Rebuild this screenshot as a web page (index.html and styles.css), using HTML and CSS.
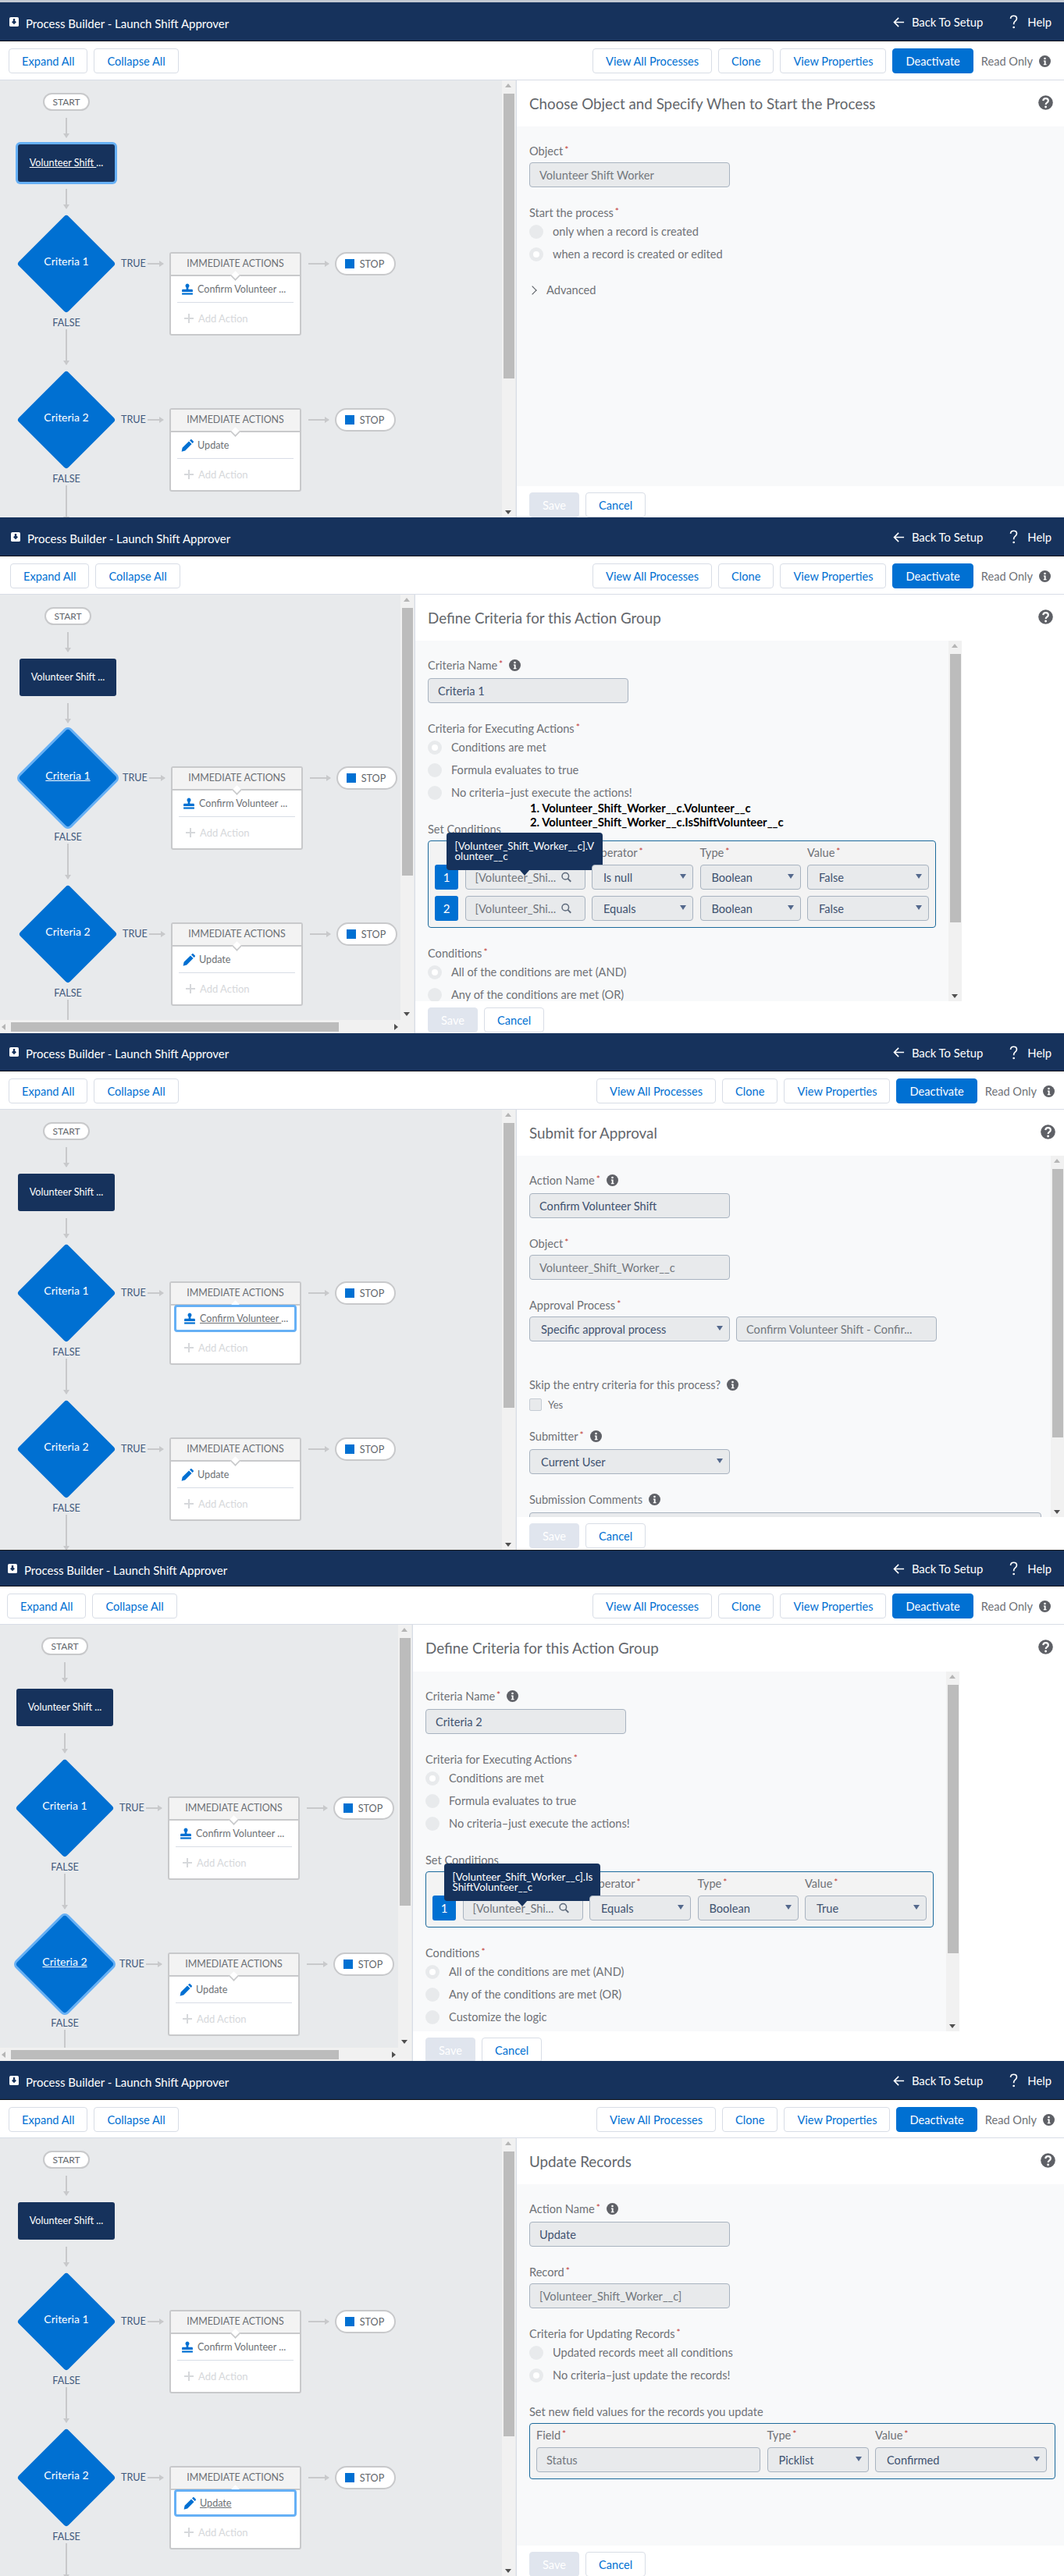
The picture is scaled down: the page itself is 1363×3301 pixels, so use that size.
FILE: index.html
```html
<!DOCTYPE html>
<html lang="en">
<head>
  <meta charset="UTF-8" />
  <title>Process Builder - Launch Shift Approver</title>
  <link rel="stylesheet" href="styles.css">
</head>
<body>
  <!-- ICONS -->
  <svg class="sprite" aria-hidden="true">
    <symbol id="i-logo" viewBox="0 0 16 16"><rect x="0" y="0" width="16" height="16" rx="2.5" fill="#fff"/><path d="M8 4.5 12 8.4 8 12.4 4 8.4zM6.4 2.5h3.2v3H6.4z" fill="#16325c"/></symbol>
    <symbol id="i-back" viewBox="0 0 16 16"><path d="M15 8H1.8M7.6 2 1.6 8l6 6" fill="none" stroke="#fff" stroke-width="1.7"/></symbol>
    <symbol id="i-q" viewBox="0 0 12 20"><path d="M1.6 5.4C1.8 2.8 3.6 1.4 6 1.4c2.600 0 4.400 1.500 4.400 3.900 0 2-1.200 3-2.500 4-1.100.9-1.700 1.600-1.700 3.300v1.100" fill="none" stroke="#fff" stroke-width="1.900"/><circle cx="6.200" cy="17.800" r="1.500" fill="#fff"/></symbol>
    <symbol id="i-info" viewBox="0 0 16 16"><circle cx="8" cy="8" r="8" fill="currentColor"/><circle cx="8" cy="4.300" r="1.400" fill="#fff"/><path d="M6.300 7h2.900v4.800h1v1.300H6.200v-1.300h1V8.300h-.9z" fill="#fff"/></symbol>
    <symbol id="i-help" viewBox="0 0 20 20"><circle cx="10" cy="10" r="9.800" fill="currentColor"/><path d="M6.600 7.400C6.800 5.400 8.200 4.300 10.100 4.300c2 0 3.400 1.200 3.400 3 0 1.500-.9 2.200-1.800 2.900-.9.700-1.500 1.300-1.500 2.500" fill="none" stroke="#fff" stroke-width="2.300"/><circle cx="10.100" cy="15.800" r="1.500" fill="#fff"/></symbol>
    <symbol id="i-stamp" viewBox="0 0 16 16"><path d="M8 .6a2.600 2.600 0 0 0-1.800 4.400c.5.600.6 1.400.4 2.800H2.400c-.8 0-1.300.5-1.300 1.300V11h13.800V9.100c0-.8-.5-1.300-1.300-1.300H9.400c-.2-1.400-.1-2.200.4-2.800A2.600 2.600 0 0 0 8 .6z" fill="currentColor"/><rect x="1.100" y="12.400" width="13.800" height="2.200" fill="currentColor"/></symbol>
    <symbol id="i-pencil" viewBox="0 0 16 16"><path d="M.6 15.700l1-4.900L10 2.400l3.600 3.600-8.400 8.500zM11 1.400l1-1c.5-.5 1.200-.5 1.700 0l1.900 1.900c.5.500.5 1.200 0 1.700l-1 1z" fill="currentColor"/></symbol>
    <symbol id="i-search" viewBox="0 0 14 14"><circle cx="5.700" cy="5.700" r="4.600" fill="none" stroke="#5f6b7c" stroke-width="1.600"/><path d="M9 9l4.200 4.200" stroke="#5f6b7c" stroke-width="2"/></symbol>
  </svg>

  <!-- SCREEN 1: START THE PROCESS -->
  <section class="screen screen-1">
    <header class="topbar">
      <div class="topbar-title"><svg class="logo"><use href="#i-logo"/></svg>Process Builder - Launch Shift Approver</div>
      <div class="topbar-links">
        <a class="top-link"><svg class="back-icon"><use href="#i-back"/></svg>Back To Setup</a>
        <a class="top-link top-help"><svg class="q-icon"><use href="#i-q"/></svg>Help</a>
      </div>
    </header>
    <div class="toolbar">
      <div class="btn-group">
        <a class="btn">Expand All</a>
        <a class="btn">Collapse All</a>
      </div>
      <div class="btn-group">
        <a class="btn">View All Processes</a>
        <a class="btn">Clone</a>
        <a class="btn">View Properties</a>
        <a class="btn btn-brand">Deactivate</a>
        <span class="read-only">Read Only<svg class="info"><use href="#i-info"/></svg></span>
      </div>
    </div>
    <div class="workspace">
      <div class="canvas">
        <div class="flow">
          <div class="pill pill-start">START</div>
          <div class="link"></div>
          <div class="object-node is-active"><u>Volunteer Shift </u>...</div>
          <div class="link"></div>
          <div class="criteria">
            <div class="decision">
              <div class="diamond"><span>Criteria 1</span></div>
              <div class="false-label">FALSE</div>
              <div class="link link-false"></div>
            </div>
            <div class="branch">
              <span class="true-label">TRUE</span><span class="harrow harrow-a"></span>
              <div class="actions">
                <div class="actions-head">IMMEDIATE ACTIONS</div>
                <div class="action"><svg class="action-icon"><use href="#i-stamp"/></svg><span>Confirm Volunteer ...</span></div>
                <div class="add-action"><span class="plus"></span>Add Action</div>
              </div>
              <span class="harrow harrow-b"></span>
              <div class="pill pill-stop"><i class="stop-box"></i>STOP</div>
            </div>
          </div>
          <div class="criteria">
            <div class="decision">
              <div class="diamond"><span>Criteria 2</span></div>
              <div class="false-label">FALSE</div>
              <div class="link link-false"></div>
            </div>
            <div class="branch">
              <span class="true-label">TRUE</span><span class="harrow harrow-a"></span>
              <div class="actions">
                <div class="actions-head">IMMEDIATE ACTIONS</div>
                <div class="action"><svg class="action-icon"><use href="#i-pencil"/></svg><span>Update</span></div>
                <div class="add-action"><span class="plus"></span>Add Action</div>
              </div>
              <span class="harrow harrow-b"></span>
              <div class="pill pill-stop"><i class="stop-box"></i>STOP</div>
            </div>
          </div>
        </div>
        <div class="vscroll"><i class="arrow-up"></i><div class="thumb"></div><i class="arrow-down"></i></div>
      </div>
      <div class="panel">
        <div class="panel-head"><h2>Choose Object and Specify When to Start the Process</h2><svg class="help"><use href="#i-help"/></svg></div>
        <div class="panel-body">
          <div class="field">
            <div class="label">Object<span class="req">*</span></div>
            <div class="input">Volunteer Shift Worker</div>
          </div>
          <div class="field">
            <div class="label label-radios">Start the process<span class="req">*</span></div>
            <div class="radio"><i class="dot"></i>only when a record is created</div>
            <div class="radio"><i class="dot dot-on"></i>when a record is created or edited</div>
          </div>
          <div class="advanced"><i class="chevron"></i>Advanced</div>
        </div>
        <div class="panel-foot"><a class="btn btn-save">Save</a><a class="btn">Cancel</a></div>
      </div>
    </div>
  </section>

  <!-- SCREEN 2: CRITERIA 1 -->
  <section class="screen screen-2 is-narrow">
    <header class="topbar">
      <div class="topbar-title"><svg class="logo"><use href="#i-logo"/></svg>Process Builder - Launch Shift Approver</div>
      <div class="topbar-links">
        <a class="top-link"><svg class="back-icon"><use href="#i-back"/></svg>Back To Setup</a>
        <a class="top-link top-help"><svg class="q-icon"><use href="#i-q"/></svg>Help</a>
      </div>
    </header>
    <div class="toolbar">
      <div class="btn-group">
        <a class="btn">Expand All</a>
        <a class="btn">Collapse All</a>
      </div>
      <div class="btn-group">
        <a class="btn">View All Processes</a>
        <a class="btn">Clone</a>
        <a class="btn">View Properties</a>
        <a class="btn btn-brand">Deactivate</a>
        <span class="read-only">Read Only<svg class="info"><use href="#i-info"/></svg></span>
      </div>
    </div>
    <div class="workspace">
      <div class="canvas">
        <div class="flow">
          <div class="pill pill-start">START</div>
          <div class="link"></div>
          <div class="object-node">Volunteer Shift ...</div>
          <div class="link"></div>
          <div class="criteria">
            <div class="decision">
              <div class="diamond is-active"><span><u>Criteria 1</u></span></div>
              <div class="false-label">FALSE</div>
              <div class="link link-false"></div>
            </div>
            <div class="branch">
              <span class="true-label">TRUE</span><span class="harrow harrow-a"></span>
              <div class="actions">
                <div class="actions-head">IMMEDIATE ACTIONS</div>
                <div class="action"><svg class="action-icon"><use href="#i-stamp"/></svg><span>Confirm Volunteer ...</span></div>
                <div class="add-action"><span class="plus"></span>Add Action</div>
              </div>
              <span class="harrow harrow-b"></span>
              <div class="pill pill-stop"><i class="stop-box"></i>STOP</div>
            </div>
          </div>
          <div class="criteria">
            <div class="decision">
              <div class="diamond"><span>Criteria 2</span></div>
              <div class="false-label">FALSE</div>
              <div class="link link-false"></div>
            </div>
            <div class="branch">
              <span class="true-label">TRUE</span><span class="harrow harrow-a"></span>
              <div class="actions">
                <div class="actions-head">IMMEDIATE ACTIONS</div>
                <div class="action"><svg class="action-icon"><use href="#i-pencil"/></svg><span>Update</span></div>
                <div class="add-action"><span class="plus"></span>Add Action</div>
              </div>
              <span class="harrow harrow-b"></span>
              <div class="pill pill-stop"><i class="stop-box"></i>STOP</div>
            </div>
          </div>
        </div>
        <div class="vscroll"><i class="arrow-up"></i><div class="thumb"></div><i class="arrow-down"></i></div>
        <div class="hscroll"><i class="arrow-left"></i><div class="hthumb"></div><i class="arrow-right"></i></div>
      </div>
      <div class="panel">
        <div class="panel-head"><h2>Define Criteria for this Action Group</h2><svg class="help"><use href="#i-help"/></svg></div>
        <div class="panel-body">
          <div class="field">
            <div class="label label-info">Criteria Name<span class="req">*</span><svg class="info"><use href="#i-info"/></svg></div>
            <div class="input input-value">Criteria 1</div>
          </div>
          <div class="field">
            <div class="label label-radios">Criteria for Executing Actions<span class="req">*</span></div>
            <div class="radio"><i class="dot dot-on"></i>Conditions are met</div>
            <div class="radio"><i class="dot"></i>Formula evaluates to true</div>
            <div class="radio"><i class="dot"></i>No criteria–just execute the actions!</div>
          </div>
          <div class="field">
            <div class="label">Set Conditions</div>
            <div class="rows rows-criteria">
              <div class="rows-label"></div>
              <div class="rows-label rows-label-hidden">Field<span class="req">*</span></div>
              <div class="rows-label">Operator<span class="req">*</span></div>
              <div class="rows-label">Type<span class="req">*</span></div>
              <div class="rows-label">Value<span class="req">*</span></div>
              <div class="chip">1</div>
              <div class="input input-lookup">[Volunteer_Shi...<svg class="search"><use href="#i-search"/></svg>
                <div class="tooltip">[Volunteer_Shift_Worker__c].V<br>olunteer__c</div>
              </div>
              <div class="select">Is null</div>
              <div class="select">Boolean</div>
              <div class="select">False</div>
              <div class="chip">2</div>
              <div class="input input-lookup">[Volunteer_Shi...<svg class="search"><use href="#i-search"/></svg></div>
              <div class="select">Equals</div>
              <div class="select">Boolean</div>
              <div class="select">False</div>
            </div>
          </div>
          <div class="field">
            <div class="label label-radios">Conditions<span class="req">*</span></div>
            <div class="radio"><i class="dot dot-on"></i>All of the conditions are met (AND)</div>
            <div class="radio"><i class="dot"></i>Any of the conditions are met (OR)</div>
          </div>
          <ol class="note">
            <li>1. Volunteer_Shift_Worker__c.Volunteer__c</li>
            <li>2. Volunteer_Shift_Worker__c.IsShiftVolunteer__c</li>
          </ol>
          <div class="vscroll"><i class="arrow-up"></i><div class="thumb"></div><i class="arrow-down"></i></div>
        </div>
        <div class="panel-foot"><a class="btn btn-save">Save</a><a class="btn">Cancel</a></div>
      </div>
    </div>
  </section>

  <!-- SCREEN 3: SUBMIT FOR APPROVAL -->
  <section class="screen screen-3">
    <header class="topbar">
      <div class="topbar-title"><svg class="logo"><use href="#i-logo"/></svg>Process Builder - Launch Shift Approver</div>
      <div class="topbar-links">
        <a class="top-link"><svg class="back-icon"><use href="#i-back"/></svg>Back To Setup</a>
        <a class="top-link top-help"><svg class="q-icon"><use href="#i-q"/></svg>Help</a>
      </div>
    </header>
    <div class="toolbar">
      <div class="btn-group">
        <a class="btn">Expand All</a>
        <a class="btn">Collapse All</a>
      </div>
      <div class="btn-group">
        <a class="btn">View All Processes</a>
        <a class="btn">Clone</a>
        <a class="btn">View Properties</a>
        <a class="btn btn-brand">Deactivate</a>
        <span class="read-only">Read Only<svg class="info"><use href="#i-info"/></svg></span>
      </div>
    </div>
    <div class="workspace">
      <div class="canvas">
        <div class="flow">
          <div class="pill pill-start">START</div>
          <div class="link"></div>
          <div class="object-node">Volunteer Shift ...</div>
          <div class="link"></div>
          <div class="criteria">
            <div class="decision">
              <div class="diamond"><span>Criteria 1</span></div>
              <div class="false-label">FALSE</div>
              <div class="link link-false"></div>
            </div>
            <div class="branch">
              <span class="true-label">TRUE</span><span class="harrow harrow-a"></span>
              <div class="actions">
                <div class="actions-head">IMMEDIATE ACTIONS</div>
                <div class="action is-active"><svg class="action-icon"><use href="#i-stamp"/></svg><span><u>Confirm Volunteer </u>...</span></div>
                <div class="add-action"><span class="plus"></span>Add Action</div>
              </div>
              <span class="harrow harrow-b"></span>
              <div class="pill pill-stop"><i class="stop-box"></i>STOP</div>
            </div>
          </div>
          <div class="criteria">
            <div class="decision">
              <div class="diamond"><span>Criteria 2</span></div>
              <div class="false-label">FALSE</div>
              <div class="link link-false"></div>
            </div>
            <div class="branch">
              <span class="true-label">TRUE</span><span class="harrow harrow-a"></span>
              <div class="actions">
                <div class="actions-head">IMMEDIATE ACTIONS</div>
                <div class="action"><svg class="action-icon"><use href="#i-pencil"/></svg><span>Update</span></div>
                <div class="add-action"><span class="plus"></span>Add Action</div>
              </div>
              <span class="harrow harrow-b"></span>
              <div class="pill pill-stop"><i class="stop-box"></i>STOP</div>
            </div>
          </div>
        </div>
        <div class="vscroll"><i class="arrow-up"></i><div class="thumb"></div><i class="arrow-down"></i></div>
      </div>
      <div class="panel">
        <div class="panel-head"><h2>Submit for Approval</h2><svg class="help"><use href="#i-help"/></svg></div>
        <div class="panel-body">
          <div class="field">
            <div class="label label-info">Action Name<span class="req">*</span><svg class="info"><use href="#i-info"/></svg></div>
            <div class="input input-value">Confirm Volunteer Shift</div>
          </div>
          <div class="field">
            <div class="label">Object<span class="req">*</span></div>
            <div class="input">Volunteer_Shift_Worker__c</div>
          </div>
          <div class="field field-spaced">
            <div class="label">Approval Process<span class="req">*</span></div>
            <div class="input-pair">
              <div class="select select-wide">Specific approval process</div>
              <div class="input">Confirm Volunteer Shift - Confir...</div>
            </div>
          </div>
          <div class="field">
            <div class="label label-check">Skip the entry criteria for this process?<svg class="info"><use href="#i-info"/></svg></div>
            <div class="check-row"><i class="checkbox"></i>Yes</div>
          </div>
          <div class="field">
            <div class="label label-info">Submitter<span class="req">*</span><svg class="info"><use href="#i-info"/></svg></div>
            <div class="select select-wide">Current User</div>
          </div>
          <div class="field">
            <div class="label label-info">Submission Comments<svg class="info"><use href="#i-info"/></svg></div>
            <div class="textarea"></div>
          </div>
          <div class="vscroll"><i class="arrow-up"></i><div class="thumb"></div><i class="arrow-down"></i></div>
        </div>
        <div class="panel-foot"><a class="btn btn-save">Save</a><a class="btn">Cancel</a></div>
      </div>
    </div>
  </section>

  <!-- SCREEN 4: CRITERIA 2 -->
  <section class="screen screen-4 is-narrow">
    <header class="topbar">
      <div class="topbar-title"><svg class="logo"><use href="#i-logo"/></svg>Process Builder - Launch Shift Approver</div>
      <div class="topbar-links">
        <a class="top-link"><svg class="back-icon"><use href="#i-back"/></svg>Back To Setup</a>
        <a class="top-link top-help"><svg class="q-icon"><use href="#i-q"/></svg>Help</a>
      </div>
    </header>
    <div class="toolbar">
      <div class="btn-group">
        <a class="btn">Expand All</a>
        <a class="btn">Collapse All</a>
      </div>
      <div class="btn-group">
        <a class="btn">View All Processes</a>
        <a class="btn">Clone</a>
        <a class="btn">View Properties</a>
        <a class="btn btn-brand">Deactivate</a>
        <span class="read-only">Read Only<svg class="info"><use href="#i-info"/></svg></span>
      </div>
    </div>
    <div class="workspace">
      <div class="canvas">
        <div class="flow">
          <div class="pill pill-start">START</div>
          <div class="link"></div>
          <div class="object-node">Volunteer Shift ...</div>
          <div class="link"></div>
          <div class="criteria">
            <div class="decision">
              <div class="diamond"><span>Criteria 1</span></div>
              <div class="false-label">FALSE</div>
              <div class="link link-false"></div>
            </div>
            <div class="branch">
              <span class="true-label">TRUE</span><span class="harrow harrow-a"></span>
              <div class="actions">
                <div class="actions-head">IMMEDIATE ACTIONS</div>
                <div class="action"><svg class="action-icon"><use href="#i-stamp"/></svg><span>Confirm Volunteer ...</span></div>
                <div class="add-action"><span class="plus"></span>Add Action</div>
              </div>
              <span class="harrow harrow-b"></span>
              <div class="pill pill-stop"><i class="stop-box"></i>STOP</div>
            </div>
          </div>
          <div class="criteria">
            <div class="decision">
              <div class="diamond is-active"><span><u>Criteria 2</u></span></div>
              <div class="false-label">FALSE</div>
              <div class="link link-false"></div>
            </div>
            <div class="branch">
              <span class="true-label">TRUE</span><span class="harrow harrow-a"></span>
              <div class="actions">
                <div class="actions-head">IMMEDIATE ACTIONS</div>
                <div class="action"><svg class="action-icon"><use href="#i-pencil"/></svg><span>Update</span></div>
                <div class="add-action"><span class="plus"></span>Add Action</div>
              </div>
              <span class="harrow harrow-b"></span>
              <div class="pill pill-stop"><i class="stop-box"></i>STOP</div>
            </div>
          </div>
        </div>
        <div class="vscroll"><i class="arrow-up"></i><div class="thumb"></div><i class="arrow-down"></i></div>
        <div class="hscroll"><i class="arrow-left"></i><div class="hthumb"></div><i class="arrow-right"></i></div>
      </div>
      <div class="panel">
        <div class="panel-head"><h2>Define Criteria for this Action Group</h2><svg class="help"><use href="#i-help"/></svg></div>
        <div class="panel-body">
          <div class="field">
            <div class="label label-info">Criteria Name<span class="req">*</span><svg class="info"><use href="#i-info"/></svg></div>
            <div class="input input-value">Criteria 2</div>
          </div>
          <div class="field">
            <div class="label label-radios">Criteria for Executing Actions<span class="req">*</span></div>
            <div class="radio"><i class="dot dot-on"></i>Conditions are met</div>
            <div class="radio"><i class="dot"></i>Formula evaluates to true</div>
            <div class="radio"><i class="dot"></i>No criteria–just execute the actions!</div>
          </div>
          <div class="field">
            <div class="label">Set Conditions</div>
            <div class="rows rows-criteria">
              <div class="rows-label"></div>
              <div class="rows-label rows-label-hidden">Field<span class="req">*</span></div>
              <div class="rows-label">Operator<span class="req">*</span></div>
              <div class="rows-label">Type<span class="req">*</span></div>
              <div class="rows-label">Value<span class="req">*</span></div>
              <div class="chip">1</div>
              <div class="input input-lookup">[Volunteer_Shi...<svg class="search"><use href="#i-search"/></svg>
                <div class="tooltip">[Volunteer_Shift_Worker__c].Is<br>ShiftVolunteer__c</div>
              </div>
              <div class="select">Equals</div>
              <div class="select">Boolean</div>
              <div class="select">True</div>
            </div>
          </div>
          <div class="field">
            <div class="label label-radios">Conditions<span class="req">*</span></div>
            <div class="radio"><i class="dot dot-on"></i>All of the conditions are met (AND)</div>
            <div class="radio"><i class="dot"></i>Any of the conditions are met (OR)</div>
            <div class="radio"><i class="dot"></i>Customize the logic</div>
          </div>
          <div class="vscroll"><i class="arrow-up"></i><div class="thumb"></div><i class="arrow-down"></i></div>
        </div>
        <div class="panel-foot"><a class="btn btn-save">Save</a><a class="btn">Cancel</a></div>
      </div>
    </div>
  </section>

  <!-- SCREEN 5: UPDATE RECORDS -->
  <section class="screen screen-5">
    <header class="topbar">
      <div class="topbar-title"><svg class="logo"><use href="#i-logo"/></svg>Process Builder - Launch Shift Approver</div>
      <div class="topbar-links">
        <a class="top-link"><svg class="back-icon"><use href="#i-back"/></svg>Back To Setup</a>
        <a class="top-link top-help"><svg class="q-icon"><use href="#i-q"/></svg>Help</a>
      </div>
    </header>
    <div class="toolbar">
      <div class="btn-group">
        <a class="btn">Expand All</a>
        <a class="btn">Collapse All</a>
      </div>
      <div class="btn-group">
        <a class="btn">View All Processes</a>
        <a class="btn">Clone</a>
        <a class="btn">View Properties</a>
        <a class="btn btn-brand">Deactivate</a>
        <span class="read-only">Read Only<svg class="info"><use href="#i-info"/></svg></span>
      </div>
    </div>
    <div class="workspace">
      <div class="canvas">
        <div class="flow">
          <div class="pill pill-start">START</div>
          <div class="link"></div>
          <div class="object-node">Volunteer Shift ...</div>
          <div class="link"></div>
          <div class="criteria">
            <div class="decision">
              <div class="diamond"><span>Criteria 1</span></div>
              <div class="false-label">FALSE</div>
              <div class="link link-false"></div>
            </div>
            <div class="branch">
              <span class="true-label">TRUE</span><span class="harrow harrow-a"></span>
              <div class="actions">
                <div class="actions-head">IMMEDIATE ACTIONS</div>
                <div class="action"><svg class="action-icon"><use href="#i-stamp"/></svg><span>Confirm Volunteer ...</span></div>
                <div class="add-action"><span class="plus"></span>Add Action</div>
              </div>
              <span class="harrow harrow-b"></span>
              <div class="pill pill-stop"><i class="stop-box"></i>STOP</div>
            </div>
          </div>
          <div class="criteria">
            <div class="decision">
              <div class="diamond"><span>Criteria 2</span></div>
              <div class="false-label">FALSE</div>
              <div class="link link-false"></div>
            </div>
            <div class="branch">
              <span class="true-label">TRUE</span><span class="harrow harrow-a"></span>
              <div class="actions">
                <div class="actions-head">IMMEDIATE ACTIONS</div>
                <div class="action is-active"><svg class="action-icon"><use href="#i-pencil"/></svg><span><u>Update</u></span></div>
                <div class="add-action"><span class="plus"></span>Add Action</div>
              </div>
              <span class="harrow harrow-b"></span>
              <div class="pill pill-stop"><i class="stop-box"></i>STOP</div>
            </div>
          </div>
        </div>
        <div class="vscroll"><i class="arrow-up"></i><div class="thumb"></div><i class="arrow-down"></i></div>
      </div>
      <div class="panel">
        <div class="panel-head"><h2>Update Records</h2><svg class="help"><use href="#i-help"/></svg></div>
        <div class="panel-body">
          <div class="field">
            <div class="label label-info">Action Name<span class="req">*</span><svg class="info"><use href="#i-info"/></svg></div>
            <div class="input input-value">Update</div>
          </div>
          <div class="field">
            <div class="label">Record<span class="req">*</span></div>
            <div class="input">[Volunteer_Shift_Worker__c]</div>
          </div>
          <div class="field">
            <div class="label label-radios">Criteria for Updating Records<span class="req">*</span></div>
            <div class="radio"><i class="dot"></i>Updated records meet all conditions</div>
            <div class="radio"><i class="dot dot-on"></i>No criteria–just update the records!</div>
          </div>
          <div class="field">
            <div class="label">Set new field values for the records you update</div>
            <div class="rows rows-update">
              <div class="rows-label">Field<span class="req">*</span></div>
              <div class="rows-label">Type<span class="req">*</span></div>
              <div class="rows-label">Value<span class="req">*</span></div>
              <div class="input">Status</div>
              <div class="select">Picklist</div>
              <div class="select">Confirmed</div>
            </div>
          </div>
        </div>
        <div class="panel-foot"><a class="btn btn-save">Save</a><a class="btn">Cancel</a></div>
      </div>
    </div>
  </section>
</body>
</html>
```

FILE: styles.css
```css
* {
  box-sizing: border-box;
}

body {
  margin: 0;
  background: #fff;
  font-family: Lato, "Open Sans", sans-serif;
  font-size: 14.6px;
  color: #6f7277;
}

.sprite {
  display: none;
}

/* screens stacked one above the other */
.screen {
  display: flex;
  flex-direction: column;
  overflow: hidden;
}

.screen-1 { height: 663px; border-top: 3px solid #c3cad3; }
.screen-2 { height: 661px; }
.screen-3 { height: 662px; }
.screen-4 { height: 655px; border-top: 1px solid #14171c; }
.screen-5 { height: 660px; }

/* top bar */
.topbar {
  flex: none;
  height: 50px;
  display: flex;
  justify-content: space-between;
  align-items: center;
  padding: 4px 16px 0 12px;
  background: #16325c;
  border-bottom: 1px solid #0b0f16;
  color: #fff;
}

.screen-2 .topbar { padding-left: 14px; }
.screen-3 .topbar { height: 49px; }
.screen-4 .topbar { height: 46px; padding-left: 10px; }

.topbar-title {
  display: flex;
  align-items: center;
  font-size: 15px;
}

.logo {
  width: 12px;
  height: 12px;
  margin-right: 9px;
  margin-top: -4px;
}

.topbar-links {
  display: flex;
  margin-top: -3px;
}

.top-link {
  display: flex;
  align-items: center;
  font-size: 14.8px;
}

.top-help {
  margin-left: 34px;
}

.back-icon {
  width: 15px;
  height: 15px;
  margin-right: 9px;
}

.q-icon {
  width: 11px;
  height: 18px;
  margin-right: 12px;
}

/* toolbar */
.toolbar {
  flex: none;
  height: 49px;
  display: flex;
  justify-content: space-between;
  padding: 9px 17px 0 11px;
  background: #fff;
  border-bottom: 1px solid #d8dde6;
}

.screen-1 .toolbar { height: 50px; }
.screen-2 .toolbar { padding-left: 13px; }
.screen-3 .toolbar,
.screen-5 .toolbar { padding-right: 12px; }
.screen-4 .toolbar { padding-left: 9px; }

.btn-group {
  display: flex;
  align-items: flex-start;
  gap: 8px;
}

.btn {
  display: flex;
  align-items: center;
  justify-content: center;
  height: 32px;
  padding: 0 16px;
  background: #fff;
  border: 1px solid #d8dde6;
  border-radius: 4px;
  color: #0070d2;
}

.btn-brand {
  background: #0070d2;
  border-color: #0070d2;
  color: #fff;
}

.btn-save {
  width: 64px;
  background: #e0e5ee;
  border-color: #e0e5ee;
  color: #fff;
}

.read-only {
  display: flex;
  align-items: center;
  height: 32px;
  margin-left: 2px;
}

.info {
  width: 15px;
  height: 15px;
  margin-left: 8px;
  flex: none;
  color: #5e6066;
}

/* workspace */
.workspace {
  flex: 1;
  min-height: 0;
  display: flex;
}

.canvas {
  position: relative;
  flex: none;
  width: 661px;
  padding: 16px 0 0 23px;
  background: #e8eaec;
  overflow: hidden;
  font-size: 12.6px;
}

.screen-2 .canvas { width: 531px; padding-left: 25px; }
.screen-4 .canvas { width: 528px; padding-left: 21px; }

.flow {
  width: 124px;
}

.pill {
  background: #fff;
  border: 2px solid #c8c9cb;
  border-radius: 15px;
  display: flex;
  align-items: center;
  justify-content: center;
  color: #62666c;
}

.pill-start {
  width: 60px;
  height: 23px;
  margin: 0 auto;
  font-size: 12px;
}

.link {
  position: relative;
  width: 2px;
  height: 25px;
  margin: 9px auto;
  background: #c8c9cb;
}

.link::after {
  content: "";
  position: absolute;
  left: -3px;
  bottom: -1px;
  border: 4px solid transparent;
  border-bottom-width: 0;
  border-top: 6px solid #c8c9cb;
}

.link-false {
  height: 45px;
  margin: 0 auto 9px;
}

.object-node {
  height: 48px;
  display: flex;
  align-items: center;
  justify-content: center;
  padding-bottom: 2px;
  background: #16325c;
  border-radius: 3px;
  color: #fff;
  white-space: pre;
}

.object-node.is-active {
  box-shadow: 0 0 0 3px #66b0f5;
}

.criteria {
  position: relative;
  height: 200px;
}

.decision {
  width: 124px;
}

.diamond {
  position: relative;
  width: 124px;
  height: 124px;
  display: flex;
  align-items: center;
  justify-content: center;
  color: #fff;
  font-size: 14px;
}

.diamond::before {
  content: "";
  position: absolute;
  left: 17px;
  top: 17px;
  width: 90px;
  height: 90px;
  background: #0070d2;
  border-radius: 4px;
  transform: rotate(45deg);
}

.diamond.is-active::before {
  box-shadow: 0 0 0 3px #66b0f5;
}

.diamond span {
  position: relative;
  margin-top: -8px;
}

.false-label {
  height: 16px;
  margin-top: 6px;
  line-height: 16px;
  text-align: center;
  color: #41597c;
}

/* TRUE arrow, actions card and STOP, laid over the free space right of the diamond */
.branch {
  position: absolute;
  left: 132px;
  top: 47px;
  display: flex;
  align-items: flex-start;
}

.true-label {
  width: 30px;
  height: 30px;
  line-height: 30px;
  color: #41597c;
}

.harrow {
  position: relative;
  height: 2px;
  margin-top: 14px;
  background: #c8c9cb;
}

.harrow::after {
  content: "";
  position: absolute;
  right: -1px;
  top: -3px;
  border: 4px solid transparent;
  border-right-width: 0;
  border-left: 6px solid #c8c9cb;
}

.harrow-a {
  width: 20px;
  margin-left: 4px;
  margin-right: 8px;
}

.harrow-b {
  width: 26px;
  margin-left: 9px;
  margin-right: 8px;
}

.actions {
  width: 169px;
  height: 107px;
  background: #fff;
  border: 2px solid #c8c9cb;
  border-radius: 3px;
}

.actions-head {
  position: relative;
  height: 29px;
  line-height: 26px;
  text-align: center;
  background: #f3f3f3;
  border-bottom: 2px solid #c8c9cb;
  color: #6b6f74;
  font-size: 12.4px;
}

.actions-head::after {
  content: "";
  position: absolute;
  left: 77px;
  bottom: -7px;
  width: 9px;
  height: 9px;
  background: #fff;
  border-right: 2px solid #c8c9cb;
  border-bottom: 2px solid #c8c9cb;
  transform: rotate(45deg) scale(0.8);
}

.action {
  position: relative;
  height: 34px;
  margin: 0 8px;
  padding-left: 5px;
  display: flex;
  align-items: center;
  border-bottom: 1px solid #d8dde6;
  color: #6d7175;
  white-space: pre;
}

.action.is-active {
  margin: -1px 4px 0;
  height: 35px;
  padding-left: 9px;
  border: 3px solid #66b0f5;
  border-radius: 4px;
  background: #fff;
}

.action-icon {
  width: 16px;
  height: 16px;
  margin-right: 5px;
  color: #0070d2;
  flex: none;
}

.add-action {
  display: flex;
  align-items: center;
  height: 40px;
  padding-left: 17px;
  color: #d6d8db;
  font-size: 13px;
}

.plus {
  position: relative;
  width: 12px;
  height: 12px;
  margin-right: 6px;
}

.plus::before,
.plus::after {
  content: "";
  position: absolute;
  background: #d6d8db;
}

.plus::before {
  left: 5px;
  top: 0;
  width: 2px;
  height: 12px;
}

.plus::after {
  left: 0;
  top: 5px;
  width: 12px;
  height: 2px;
}

.pill-stop {
  width: 78px;
  height: 30px;
  padding-right: 2px;
  color: #62666c;
}

.stop-box {
  width: 12px;
  height: 12px;
  margin-right: 7px;
  background: #0070d2;
}

/* fake scrollbars lying over the canvas and the form */
.vscroll {
  position: absolute;
  right: 0;
  top: 0;
  bottom: 0;
  width: 17px;
  background: #f1f1f1;
}

.canvas .vscroll {
  right: 1px;
}

.thumb {
  position: absolute;
  left: 2px;
  right: 1px;
  top: 17px;
  height: 365px;
  background: #bcbcbc;
}

.is-narrow .canvas .thumb {
  height: 343px;
}

.panel-body .thumb {
  top: 17px;
  height: 344px;
}

.arrow-up,
.arrow-down,
.arrow-left,
.arrow-right {
  position: absolute;
  width: 0;
  height: 0;
  border: 4px solid transparent;
}

.arrow-up {
  left: 4px;
  top: 4px;
  border-top-width: 0;
  border-bottom: 5px solid #b5b5b5;
}

.arrow-down {
  left: 4px;
  bottom: 4px;
  border-bottom-width: 0;
  border-top: 5px solid #505050;
}

.is-narrow .canvas .arrow-down {
  bottom: 22px;
}

.hscroll {
  position: absolute;
  left: 0;
  right: 1px;
  bottom: 0;
  height: 17px;
  background: #f1f1f1;
}

.hthumb {
  position: absolute;
  left: 14px;
  width: 420px;
  top: 3px;
  height: 12px;
  background: #bcbcbc;
}

.arrow-left {
  left: 2px;
  top: 5px;
  border-left-width: 0;
  border-right: 5px solid #b5b5b5;
}

.arrow-right {
  right: 20px;
  top: 5px;
  border-right-width: 0;
  border-left: 5px solid #505050;
}

/* right panel */
.panel {
  flex: 1;
  min-width: 0;
  display: flex;
  flex-direction: column;
  background: #fff;
  border-left: 1px solid #d8dde6;
}

.panel-head {
  flex: none;
  height: 59px;
  display: flex;
  justify-content: space-between;
  padding: 0 14px 0 16px;
}

.screen-3 .panel-head,
.screen-5 .panel-head { padding-right: 11px; }
.screen-4 .panel-head { height: 60px; }

.panel-head h2 {
  margin: 19px 0 0;
  font-size: 18.8px;
  font-weight: 400;
  line-height: 22px;
  color: #63666b;
}

.help {
  width: 19px;
  height: 19px;
  margin-top: 19px;
  color: #5e6066;
}

.panel-body {
  position: relative;
  flex: 1;
  min-height: 0;
  padding: 22px 16px 0;
  background: #f8f9fa;
  overflow: hidden;
}

.is-narrow .panel-body {
  flex: 1 1 auto;
  width: 700px;
}

.field {
  margin-bottom: 23px;
}

.field-spaced {
  margin-bottom: 46px;
}

.label {
  display: flex;
  align-items: center;
  height: 18px;
  margin-bottom: 6px;
  color: #6f7277;
}

.label-info {
  margin-bottom: 8px;
}

.label-radios {
  margin-bottom: 1px;
}

.label-check {
  margin-bottom: 9px;
}

.req {
  margin-left: 2px;
  margin-top: -4px;
  color: #c23934;
  font-size: 12px;
}

.input,
.select,
.textarea {
  position: relative;
  height: 32px;
  display: flex;
  align-items: center;
  padding: 0 12px;
  background: #e8eaec;
  border: 1px solid #a8b3c0;
  border-radius: 4px;
  color: #73787e;
  white-space: nowrap;
}

.field > .input,
.field > .select,
.input-pair > * {
  width: 257px;
}

.input-value,
.select {
  color: #3f5270;
}

.select {
  justify-content: space-between;
  padding: 0 8px 0 14px;
}

.select::after {
  content: "";
  border: 4px solid transparent;
  border-bottom-width: 0;
  border-top: 6px solid #54698d;
  margin-top: -2px;
}

.input-pair {
  display: flex;
  gap: 8px;
}

.textarea {
  height: 60px;
  width: 656px;
}

.radio {
  display: flex;
  align-items: center;
  height: 29px;
}

.dot {
  position: relative;
  width: 18px;
  height: 18px;
  margin-right: 12px;
  border-radius: 50%;
  background: #e8eaec;
}

.dot-on::after {
  content: "";
  position: absolute;
  left: 5px;
  top: 5px;
  width: 8px;
  height: 8px;
  border-radius: 50%;
  background: #fff;
}

.advanced {
  display: flex;
  align-items: center;
}

.chevron {
  width: 8px;
  height: 8px;
  margin-right: 14px;
  border-top: 1.5px solid #54595f;
  border-right: 1.5px solid #54595f;
  transform: rotate(45deg);
}

.check-row {
  display: flex;
  align-items: center;
  height: 16px;
  font-size: 13px;
}

.checkbox {
  width: 16px;
  height: 16px;
  margin-right: 8px;
  background: #e8eaec;
  border: 1px solid #c5ccd4;
  border-radius: 2px;
}

/* condition rows */
.rows {
  display: grid;
  row-gap: 8px;
  column-gap: 8.5px;
  padding: 7px 8px 8px;
  background: #f3f3f3;
  border: 1px solid #1b6a9c;
  border-radius: 4px;
}

.rows-criteria {
  width: 651px;
  grid-template-columns: 30px 154px 130px 129px 156px;
}

.rows-update {
  width: 674px;
  grid-template-columns: 287px 130px 220px;
}

.rows-label {
  height: 15px;
  display: flex;
  align-items: center;
}

.rows-label-hidden {
  visibility: hidden;
}

.chip {
  display: flex;
  align-items: center;
  justify-content: center;
  background: #0070d2;
  border-radius: 3px;
  color: #fff;
  font-size: 15px;
}

.input-lookup {
  justify-content: space-between;
  padding-right: 17px;
}

.search {
  width: 13px;
  height: 14px;
  flex: none;
}

.tooltip {
  position: absolute;
  left: -25px;
  top: -42px;
  width: 200px;
  height: 48px;
  padding: 11px 11px 0;
  background: #16325c;
  border-radius: 4px;
  color: #fff;
  font-size: 13.4px;
  line-height: 13px;
}

.tooltip::after {
  content: "";
  position: absolute;
  left: 93px;
  bottom: -7px;
  border: 7px solid transparent;
  border-bottom-width: 0;
  border-top: 8px solid #16325c;
}

/* pasted note over the form, it is not part of the form flow */
.note {
  position: absolute;
  left: 147px;
  top: 205px;
  margin: 0;
  padding: 0;
  list-style: none;
  color: #000;
  font-weight: 700;
  line-height: 18px;
  font-size: 14.8px;
}

/* footer */
.panel-foot {
  flex: none;
  height: 40px;
  display: flex;
  gap: 8px;
  padding: 8px 0 0 16px;
  overflow: hidden;
}

.screen-2 .panel-foot { height: 41px; }
.screen-3 .panel-foot { height: 42px; }
.screen-4 .panel-foot { height: 38px; }
.screen-5 .panel-foot { height: 39px; }
```
